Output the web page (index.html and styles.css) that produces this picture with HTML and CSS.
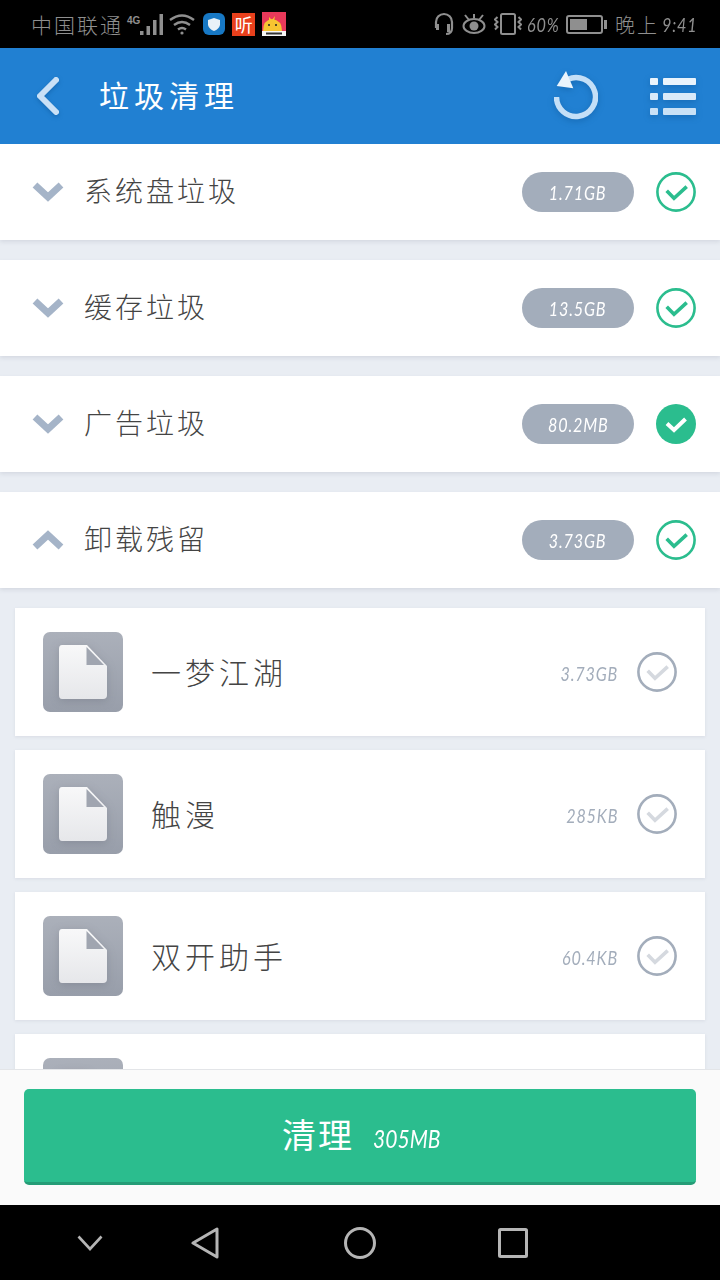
FILE: index.html
```html
<!doctype html>
<html lang="zh-CN">
<head>
  <meta charset="utf-8" />
  <title>垃圾清理</title>
  <link rel="stylesheet" href="styles.css">
</head>
<body>
  <svg class="defs" width="0" height="0">
    <symbol id="check-ring" viewBox="0 0 40 40">
      <circle cx="20" cy="20" r="18.6" fill="none" stroke="currentColor" stroke-width="2.6" />
      <polyline class="tick" points="10.7,18.7 18,26.3 30.7,14.7" fill="none" stroke-width="3.6" />
    </symbol>
    <symbol id="file-icon" viewBox="0 0 80 80">
      <path d="M20 13h25l20 21v29q0 4-4 4H20q-3 0-3-4V17q0-4 3-4z" fill="url(#doc-fill)" />
      <path d="M44.5 15L62 33H44.5z" fill="#a0a5b0" />
    </symbol>
    <linearGradient id="doc-fill" x1="0" y1="0" x2="0" y2="1">
      <stop offset="0" stop-color="#f8f8f9" />
      <stop offset="1" stop-color="#e6e7ea" />
    </linearGradient>
  </svg>

  <div class="status-bar">
    <div class="status-left">
      <span class="carrier">中国联通</span>
      <span class="net">4G</span>
      <svg class="ico-signal" width="24" height="24" viewBox="0 0 24 24" fill="#8f8f8f">
        <rect x="0" y="19" width="3.5" height="4" /><rect x="6.5" y="14" width="3.5" height="9" />
        <rect x="13" y="8" width="3.5" height="15" /><rect x="19.5" y="2" width="3.5" height="21" />
      </svg>
      <svg class="ico-wifi" width="27" height="24" viewBox="0 0 27 24" fill="none" stroke="#8f8f8f" stroke-width="2.4">
        <path d="M1 8q12-9 24 0" /><path d="M5 13q8-6 16 0" /><path d="M9 17.5q4-3 8 0" />
        <circle cx="13" cy="21" r="1.6" fill="#8f8f8f" stroke="none" />
      </svg>
      <svg class="ico-shield" width="22" height="22" viewBox="0 0 22 22">
        <rect width="22" height="22" rx="6" fill="#1778c4" />
        <path d="M11 5l6 2v5q-1 4-6 6-5-2-6-6V7z" fill="#e8f1f8" />
      </svg>
      <span class="ico-listen">听</span>
      <svg class="ico-chick" width="24" height="24" viewBox="0 0 24 24">
        <rect width="24" height="24" fill="#e8395a" />
        <rect y="19" width="24" height="5" fill="#f5f5f5" />
        <path d="M1 19q0-11 9-12 10 1 10 12z" fill="#f7c531" />
        <path d="M7 5l3 3 3-4-1 5H7z" fill="#f7c531" />
        <circle cx="7" cy="13" r="1" fill="#222" /><circle cx="14" cy="13" r="1" fill="#222" />
        <rect x="4" y="20.5" width="16" height="2" fill="#333" />
      </svg>
    </div>
    <div class="status-right">
      <svg width="20" height="24" viewBox="0 0 20 24" fill="none" stroke="#8f8f8f" stroke-width="2.2">
        <path d="M2 16V10a8 8 0 0 1 16 0v6q0 6-6 6" />
        <rect x="2" y="12" width="3" height="6" fill="#8f8f8f" stroke="none" /><rect x="13" y="12" width="3" height="8" fill="#8f8f8f" stroke="none" />
      </svg>
      <svg width="24" height="22" viewBox="0 0 24 22" fill="none" stroke="#8f8f8f" stroke-width="2">
        <ellipse cx="12" cy="13" rx="10.5" ry="7" /><circle cx="12" cy="13" r="4.5" fill="#8f8f8f" stroke="none" />
        <path d="M3 2l4 5M21 2l-4 5M12 1v4" />
      </svg>
      <svg width="28" height="24" viewBox="0 0 28 24" fill="none" stroke="#8f8f8f" stroke-width="2">
        <rect x="7" y="2" width="14" height="20" rx="1.5" />
        <path d="M3.5 5l-2.5 2.5 2.5 2.5-2.5 2.5 2.5 2.5-2.5 2.5M24.5 5l2.5 2.5-2.5 2.5 2.5 2.5-2.5 2.5 2.5 2.5" />
      </svg>
      <span class="pct"><span class="num">60%</span></span>
      <div class="battery"><div class="battery-fill"></div></div>
      <span class="clock-cn">晚上</span>
      <span class="clock"><span class="num">9:41</span></span>
    </div>
  </div>

  <header class="app-bar">
    <svg class="back" width="24" height="38" viewBox="0 0 24 38" fill="none" stroke="#c9e0f6" stroke-width="6" stroke-linecap="round" stroke-linejoin="round">
      <polyline points="20,3 4,19 20,35" />
    </svg>
    <h1 class="app-title">垃圾清理</h1>
    <svg class="refresh" width="44" height="50" viewBox="0 0 44 50" fill="none">
      <path d="M14 8.2A19.5 19.5 0 1 1 2.5 26" stroke="#c4dff7" stroke-width="5.5" />
      <path d="M2.7 15L12 0l7.3 17.3z" fill="#eaf4fc" />
    </svg>
    <svg class="menu" width="46" height="38" viewBox="0 0 46 38">
      <rect x="0" y="0" width="8" height="7" rx="1" fill="#eaf4fc" /><rect x="13" y="0" width="33" height="7" rx="1" fill="#eaf4fc" />
      <rect x="0" y="15" width="8" height="7" rx="1" fill="#d9eaf9" /><rect x="13" y="15" width="33" height="7" rx="1" fill="#d9eaf9" />
      <rect x="0" y="30" width="8" height="7" rx="1" fill="#c9e1f6" /><rect x="13" y="30" width="33" height="7" rx="1" fill="#c9e1f6" />
    </svg>
  </header>

  <main class="content">
    <section class="group">
      <svg class="arrow" width="32" height="20" viewBox="0 0 32 20"><polyline points="3,3 16,15 29,3" /></svg>
      <span class="group-name">系统盘垃圾</span>
      <span class="pill"><span class="num">1.71GB</span></span>
      <svg class="check on" width="40" height="40"><use href="#check-ring" /></svg>
    </section>
    <section class="group">
      <svg class="arrow" width="32" height="20" viewBox="0 0 32 20"><polyline points="3,3 16,15 29,3" /></svg>
      <span class="group-name">缓存垃圾</span>
      <span class="pill"><span class="num">13.5GB</span></span>
      <svg class="check on" width="40" height="40"><use href="#check-ring" /></svg>
    </section>
    <section class="group">
      <svg class="arrow" width="32" height="20" viewBox="0 0 32 20"><polyline points="3,3 16,15 29,3" /></svg>
      <span class="group-name">广告垃圾</span>
      <span class="pill"><span class="num">80.2MB</span></span>
      <svg class="check-full" width="40" height="40" viewBox="0 0 40 40">
        <circle cx="20" cy="20" r="20" fill="#2bbd8e" />
        <polyline points="11,19.5 18,26 29.5,15" fill="none" stroke="#fff" stroke-width="4" />
      </svg>
    </section>
    <section class="group">
      <svg class="arrow" width="32" height="20" viewBox="0 0 32 20"><polyline points="3,17 16,5 29,17" /></svg>
      <span class="group-name">卸载残留</span>
      <span class="pill"><span class="num">3.73GB</span></span>
      <svg class="check on" width="40" height="40"><use href="#check-ring" /></svg>
    </section>

    <ul class="files">
      <li class="file">
        <div class="file-thumb"><svg class="file-svg" width="80" height="80"><use href="#file-icon" /></svg></div>
        <span class="file-name">一梦江湖</span>
        <span class="file-size"><span class="num">3.73GB</span></span>
        <svg class="check off" width="40" height="40"><use href="#check-ring" /></svg>
      </li>
      <li class="file">
        <div class="file-thumb"><svg class="file-svg" width="80" height="80"><use href="#file-icon" /></svg></div>
        <span class="file-name">触漫</span>
        <span class="file-size"><span class="num">285KB</span></span>
        <svg class="check off" width="40" height="40"><use href="#check-ring" /></svg>
      </li>
      <li class="file">
        <div class="file-thumb"><svg class="file-svg" width="80" height="80"><use href="#file-icon" /></svg></div>
        <span class="file-name">双开助手</span>
        <span class="file-size"><span class="num">60.4KB</span></span>
        <svg class="check off" width="40" height="40"><use href="#check-ring" /></svg>
      </li>
      <li class="file">
        <div class="file-thumb"><svg class="file-svg" width="80" height="80"><use href="#file-icon" /></svg></div>
      </li>
    </ul>
  </main>

  <footer class="action-bar">
    <button class="clean-btn"><span class="clean-cn">清理</span><span class="clean-size"><span class="num">305MB</span></span></button>
  </footer>

  <nav class="nav-bar">
    <svg width="26" height="16" viewBox="0 0 26 16" fill="none" stroke="#b5b5b5" stroke-width="2.6"><polyline points="1.5,1.5 13,14 24.5,1.5" /></svg>
    <svg width="28" height="32" viewBox="0 0 28 32" fill="none" stroke="#b5b5b5" stroke-width="3" stroke-linejoin="round"><path d="M26 2v28L2 16z" /></svg>
    <svg width="32" height="32" viewBox="0 0 32 32" fill="none" stroke="#b5b5b5" stroke-width="3"><circle cx="16" cy="16" r="14.5" /></svg>
    <svg width="30" height="30" viewBox="0 0 30 30" fill="none" stroke="#b5b5b5" stroke-width="3" stroke-linejoin="round"><rect x="1.5" y="1.5" width="27" height="27" rx="1" /></svg>
  </nav>
</body>
</html>
```
FILE: styles.css
```css
* {
  box-sizing: border-box;
}

body {
  margin: 0;
  width: 720px;
  height: 1280px;
  display: flex;
  flex-direction: column;
  overflow: hidden;
  background: #e9edf3;
  font-family: "Noto Sans CJK SC", "Noto Sans", sans-serif;
}

.defs {
  position: absolute;
}

/* narrow slanted digits, used for every size value */
.num {
  display: inline-block;
  font: italic 400 20px Lato, sans-serif;
  letter-spacing: 1px;
  white-space: nowrap;
  transform: scaleX(0.81);
}

/* status bar */
.status-bar {
  height: 48px;
  flex: none;
  display: flex;
  justify-content: space-between;
  align-items: center;
  padding: 0 25px 0 31px;
  background: #000;
  color: #8f8f8f;
}

.status-left,
.status-right {
  display: flex;
  align-items: center;
}

.carrier {
  font-size: 21px;
  font-weight: 300;
  letter-spacing: 2px;
}

.net {
  align-self: flex-start;
  margin: 6px 0 0 4px;
  font: bold 10px "Liberation Sans", sans-serif;
}

.ico-signal {
  margin-left: 0;
}

.ico-wifi {
  margin-left: 5px;
}

.ico-shield {
  margin-left: 7px;
}

.ico-listen {
  width: 23px;
  height: 23px;
  margin-left: 7px;
  background: #e8401c;
  color: #fff;
  font-size: 18px;
  line-height: 23px;
  text-align: center;
}

.ico-chick {
  margin-left: 7px;
}

.status-right svg + svg {
  margin-left: 8px;
}

.pct {
  width: 30px;
  margin-left: 5px;
}

.pct .num,
.clock .num {
  transform-origin: left center;
}

.battery {
  position: relative;
  width: 37px;
  height: 19px;
  margin: 0 12px 0 9px;
  padding: 2px;
  border: 2px solid #8f8f8f;
  border-radius: 3px;
}

.battery:after {
  content: "";
  position: absolute;
  left: 36px;
  top: 3px;
  width: 3px;
  height: 9px;
  background: #8f8f8f;
}

.battery-fill {
  width: 60%;
  height: 100%;
  background: #8f8f8f;
}

.clock {
  width: 33px;
  margin-left: 3px;
}

.clock-cn {
  font-size: 20px;
  font-weight: 300;
  letter-spacing: 2px;
}

/* header */
.app-bar {
  height: 96px;
  flex: none;
  display: flex;
  align-items: center;
  padding: 0 24px 0 36px;
  background: #2180d2;
}

.back {
  filter: drop-shadow(0 2px 2px rgba(0, 60, 120, 0.3));
}

.app-title {
  flex: 1;
  margin: 0 0 4px 39px;
  color: #fff;
  font-size: 30px;
  font-weight: 400;
  letter-spacing: 5px;
}

.refresh {
  margin-right: 52px;
  filter: drop-shadow(0 2px 3px rgba(0, 60, 120, 0.3));
}

.menu {
  margin-top: 1px;
  filter: drop-shadow(0 2px 3px rgba(0, 60, 120, 0.3));
}

/* sections */
.content {
  flex: 1;
  min-height: 0;
  overflow: hidden;
}

.group {
  height: 96px;
  display: flex;
  align-items: center;
  margin-bottom: 20px;
  padding: 0 24px 0 32px;
  background: #fff;
  box-shadow: 0 2px 4px rgba(120, 130, 150, 0.18);
}

.arrow {
  flex: none;
  fill: none;
  stroke: #a5b4c8;
  stroke-width: 7;
}

.group-name {
  flex: 1;
  margin: 0 0 4px 20px;
  color: #444;
  font-size: 28px;
  font-weight: 300;
  letter-spacing: 3px;
}

.pill {
  width: 112px;
  height: 40px;
  margin-right: 22px;
  border-radius: 20px;
  background: #a3adbb;
  color: #fff;
  line-height: 42px;
  text-align: center;
}

.check.on {
  color: #2bbd8e;
  stroke: #2bbd8e;
}

.check.off {
  color: #a3adbb;
  stroke: #d5d9df;
}

.tick {
  stroke: inherit;
}

/* file list */
.files {
  margin: 0;
  padding: 0 15px;
  list-style: none;
}

.file {
  height: 128px;
  display: flex;
  align-items: center;
  margin-bottom: 14px;
  padding: 0 28px;
  background: #fff;
  box-shadow: 0 1px 3px rgba(120, 130, 150, 0.15);
}

.file-thumb {
  width: 80px;
  height: 80px;
  flex: none;
  border-radius: 7px;
  background: linear-gradient(#abb0ba, #989eaa);
}

.file-svg {
  display: block;
  margin-left: -1px;
  filter: drop-shadow(0 2px 4px rgba(80, 85, 95, 0.25));
}

.file-name {
  flex: 1;
  margin: 0 0 2px 28px;
  color: #444;
  font-size: 30px;
  font-weight: 300;
  letter-spacing: 4px;
}

.file-size {
  margin: 2px 19px 0 0;
  color: #a3adbb;
}

.file-size .num {
  transform-origin: right center;
}

/* bottom */
.action-bar {
  height: 136px;
  flex: none;
  padding: 19px 24px;
  border-top: 1px solid #e3e5e8;
  background: #fafafa;
}

.clean-btn {
  width: 100%;
  height: 96px;
  display: flex;
  justify-content: center;
  align-items: center;
  gap: 19px;
  padding: 0 0 0 3px;
  border: 0;
  border-bottom: 3px solid #259c76;
  border-radius: 5px;
  background: #2bbd8e;
  color: #fff;
}

.clean-cn {
  margin-bottom: 4px;
  font-size: 34px;
  letter-spacing: 2px;
}

.clean-size {
  width: 69px;
  margin-top: 4px;
}

.clean-size .num {
  font-size: 26px;
  letter-spacing: 0;
  transform-origin: left center;
}

.nav-bar {
  height: 75px;
  flex: none;
  display: flex;
  align-items: center;
  gap: 88px;
  padding-left: 77px;
  background: #000;
}

.nav-bar svg:nth-child(3) {
  margin-left: 37px;
}

.nav-bar svg:nth-child(4) {
  margin-left: 34px;
}
```
